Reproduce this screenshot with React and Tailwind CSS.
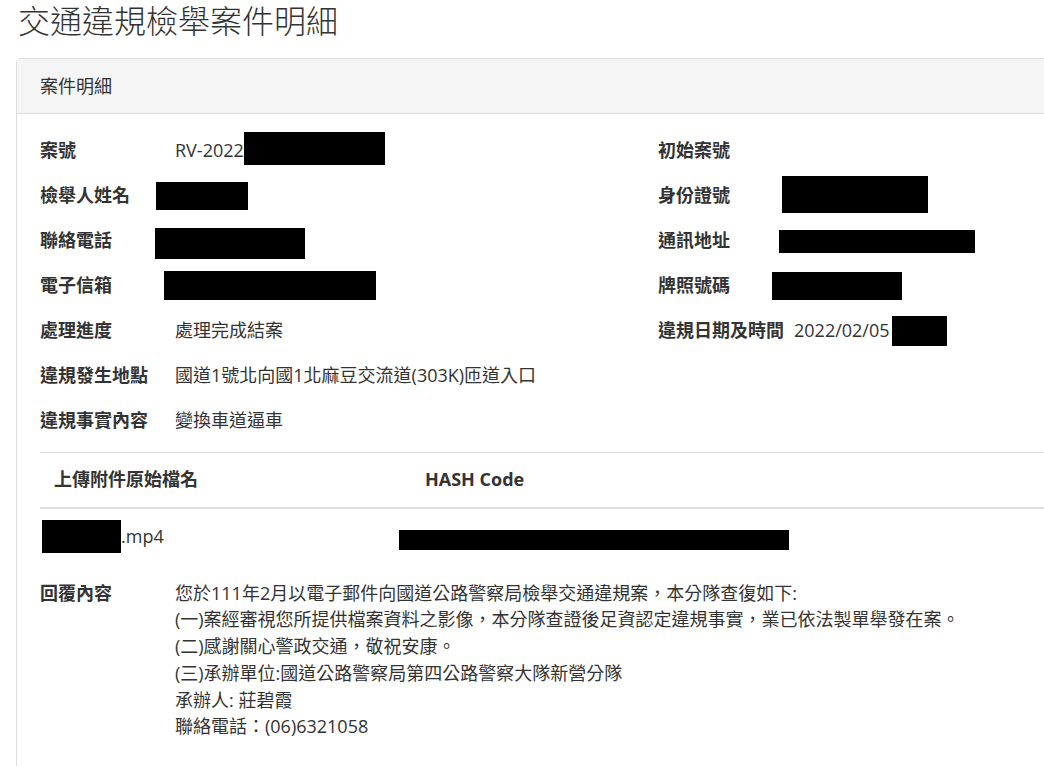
import React from "react";

// black boxes that hide personal data in the screenshot
const Redact = ({ className }) => (
	<span className={"inline-block shrink-0 bg-black " + className} />
);

const LeftRow = ({ label, children }) => (
	<div className="flex h-[45px] items-center">
		<div className="w-[135px] shrink-0 font-bold">{label}</div>
		<div className="flex items-center">{children}</div>
	</div>
);

const RightRow = ({ label, children }) => (
	<div className="flex h-[45px] items-center">
		<div className="min-w-[124px] shrink-0 pr-[10px] font-bold">{label}</div>
		<div className="flex items-center">{children}</div>
	</div>
);

const replyLines = [
	"您於111年2月以電子郵件向國道公路警察局檢舉交通違規案，本分隊查復如下:",
	"(一)案經審視您所提供檔案資料之影像，本分隊查證後足資認定違規事實，業已依法製單舉發在案。",
	"(二)感謝關心警政交通，敬祝安康。",
	"(三)承辦單位:國道公路警察局第四公路警察大隊新營分隊",
	"承辦人: 莊碧霞",
	"聯絡電話：(06)6321058",
];

const App = () => {
	return (
		<div
			className="h-[766px] w-[1044px] overflow-hidden bg-white pt-[3px] text-[18px] text-[#333]"
			style={{
				fontFamily:
					'"Segoe UI", "Open Sans", "Noto Sans CJK TC", sans-serif',
			}}>
			<h1 className="ml-[18px] text-[32px] font-light leading-[36px]">
				交通違規檢舉案件明細
			</h1>

			<div className="ml-[16px] mt-[19px] w-[1100px] rounded-tl-[4px] border border-[#ddd]">
				<div className="flex h-[55px] items-center border-b border-[#ddd] bg-[#f5f5f5] px-[23px]">
					案件明細
				</div>

				<div className="px-[23px] pt-[14px]">
					<div className="grid grid-cols-[618px_1fr]">
						<LeftRow label="案號">
							<span>RV-2022</span>
							<Redact className="mb-[5px] h-[33px] w-[141px]" />
						</LeftRow>
						<RightRow label="初始案號" />

						<LeftRow label="檢舉人姓名">
							<Redact className="-ml-[19px] h-[28px] w-[92px]" />
						</LeftRow>
						<RightRow label="身份證號">
							<Redact className="mb-[2px] h-[37px] w-[146px]" />
						</RightRow>

						<LeftRow label="聯絡電話">
							<Redact className="-ml-[20px] mt-[6px] h-[31px] w-[150px]" />
						</LeftRow>
						<RightRow label="通訊地址">
							<Redact className="-ml-[3px] mt-[2px] h-[23px] w-[196px]" />
						</RightRow>

						<LeftRow label="電子信箱">
							<Redact className="-ml-[11px] h-[29px] w-[212px]" />
						</LeftRow>
						<RightRow label="牌照號碼">
							<Redact className="-ml-[10px] h-[28px] w-[130px]" />
						</RightRow>

						<LeftRow label="處理進度">處理完成結案</LeftRow>
						<RightRow label="違規日期及時間">
							<span>2022/02/05</span>
							<Redact className="ml-[2px] h-[30px] w-[55px]" />
						</RightRow>

						<div className="col-span-2">
							<LeftRow label="違規發生地點">
								國道1號北向國1北麻豆交流道(303K)匝道入口
							</LeftRow>
						</div>
						<div className="col-span-2">
							<LeftRow label="違規事實內容">變換車道逼車</LeftRow>
						</div>
					</div>

					<table className="mt-[9px] w-full border-collapse">
						<thead>
							<tr className="border-t border-b-2 border-[#ddd]">
								<th className="h-[55px] w-[371px] px-[14px] text-left font-bold">
									上傳附件原始檔名
								</th>
								<th className="h-[55px] px-[14px] text-left font-bold">
									HASH Code
								</th>
							</tr>
						</thead>
						<tbody>
							<tr>
								<td className="h-[56px] pl-[2px]">
									<div className="flex items-center">
										<Redact className="h-[33px] w-[79px]" />
										<span>.mp4</span>
									</div>
								</td>
								<td>
									<Redact className="-ml-[12px] mt-[6px] h-[20px] w-[390px] align-middle" />
								</td>
							</tr>
						</tbody>
					</table>

					<div className="mt-[16px] flex pb-[30px] leading-[26.8px]">
						<div className="w-[135px] shrink-0 font-bold">回覆內容</div>
						<div>
							{replyLines.map((line, i) => (
								<div key={i}>{line}</div>
							))}
						</div>
					</div>
				</div>
			</div>
		</div>
	);
};

export default App;
